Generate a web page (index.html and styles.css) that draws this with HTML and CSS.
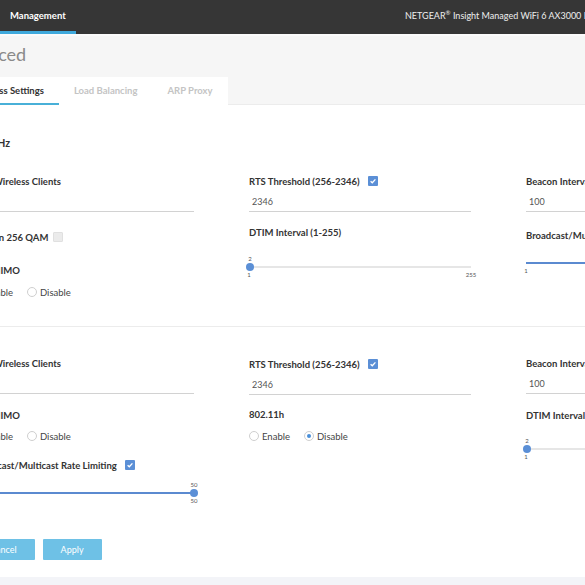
FILE: index.html
```html
<!DOCTYPE html>
<html lang="en">
<head>
<meta charset="utf-8">
<title>Advanced - Wireless Settings</title>
<link rel="stylesheet" href="styles.css">
</head>
<body>
<header class="topbar">
  <nav class="topnav">
    <a class="topnav-item active">Management</a>
  </nav>
  <div class="product">NETGEAR<sup>®</sup> Insight Managed WiFi 6 AX3000 Dual Band Multi-Gig Access Point</div>
</header>

<main class="content">
  <div class="page-head">
    <h1 class="page-title">Advanced</h1>
    <div class="tabs">
      <a class="tab active">Wireless Settings</a>
      <a class="tab">Load Balancing</a>
      <a class="tab">ARP Proxy</a>
    </div>
  </div>

  <section class="panel">
    <div class="band band-1">
      <h2 class="band-title">2.4GHz</h2>
      <div class="grid">
        <div class="col">
          <div class="label">Max Wireless Clients</div>
          <input class="text-input" value="200">
          <div class="label qam">Turn on 256 QAM <span class="cb disabled"></span></div>
          <div class="label mumimo">MU-MIMO</div>
          <div class="radios r1">
            <span class="radio-opt"><span class="radio on"></span>Enable</span>
            <span class="radio-opt"><span class="radio"></span>Disable</span>
          </div>
        </div>
        <div class="col">
          <div class="label">RTS Threshold (256-2346) <span class="cb checked"><svg viewBox="0 0 10 10"><path d="M2.6 5.2 4.3 6.8 7.4 3.4" fill="none" stroke="#fff" stroke-width="1.3"/></svg></span></div>
          <input class="text-input" value="2346">
          <div class="label dtim">DTIM Interval (1-255)</div>
          <div class="slider s-dtim">
            <div class="slider-val" style="left:0.4%">2</div>
            <div class="track"><div class="fill" style="width:0.4%"></div><span class="thumb" style="left:0.4%"></span></div>
            <div class="scale"><span class="min">1</span><span class="max">255</span></div>
          </div>
        </div>
        <div class="col">
          <div class="label">Beacon Interval (100-300)</div>
          <input class="text-input" value="100">
          <div class="label bcast">Broadcast/Multicast Rate Limiting <span class="cb checked"><svg viewBox="0 0 10 10"><path d="M2.6 5.2 4.3 6.8 7.4 3.4" fill="none" stroke="#fff" stroke-width="1.3"/></svg></span></div>
          <div class="slider s-bcast">
            <div class="slider-val" style="left:100%">50</div>
            <div class="track"><div class="fill" style="width:100%"></div><span class="thumb" style="left:100%"></span></div>
            <div class="scale"><span class="min">1</span><span class="max">50</span></div>
          </div>
        </div>
      </div>
    </div>

    <div class="band band-2">
      <div class="grid">
        <div class="col">
          <div class="label">Max Wireless Clients</div>
          <input class="text-input" value="200">
          <div class="label mumimo2">MU-MIMO</div>
          <div class="radios r2">
            <span class="radio-opt"><span class="radio on"></span>Enable</span>
            <span class="radio-opt"><span class="radio"></span>Disable</span>
          </div>
          <div class="label bcast2">Broadcast/Multicast Rate Limiting <span class="cb checked"><svg viewBox="0 0 10 10"><path d="M2.6 5.2 4.3 6.8 7.4 3.4" fill="none" stroke="#fff" stroke-width="1.3"/></svg></span></div>
          <div class="slider s-bcast2">
            <div class="slider-val" style="left:100%">50</div>
            <div class="track"><div class="fill" style="width:100%"></div><span class="thumb" style="left:100%"></span></div>
            <div class="scale"><span class="min">1</span><span class="max">50</span></div>
          </div>
        </div>
        <div class="col">
          <div class="label rts2">RTS Threshold (256-2346) <span class="cb checked"><svg viewBox="0 0 10 10"><path d="M2.6 5.2 4.3 6.8 7.4 3.4" fill="none" stroke="#fff" stroke-width="1.3"/></svg></span></div>
          <input class="text-input" value="2346">
          <div class="label h80211">802.11h</div>
          <div class="radios r3">
            <span class="radio-opt"><span class="radio"></span>Enable</span>
            <span class="radio-opt"><span class="radio on"></span>Disable</span>
          </div>
        </div>
        <div class="col">
          <div class="label">Beacon Interval (100-300)</div>
          <input class="text-input" value="100">
          <div class="label dtim2">DTIM Interval (1-255)</div>
          <div class="slider s-dtim2">
            <div class="slider-val" style="left:0.4%">2</div>
            <div class="track"><div class="fill" style="width:0.4%"></div><span class="thumb" style="left:0.4%"></span></div>
            <div class="scale"><span class="min">1</span><span class="max">255</span></div>
          </div>
        </div>
      </div>
    </div>

    <div class="actions">
      <button class="btn">Cancel</button>
      <button class="btn">Apply</button>
    </div>
  </section>
  <footer class="foot"></footer>
</main>
</body>
</html>
```

FILE: styles.css
```css
* { box-sizing: border-box; }
html, body { margin: 0; padding: 0; }
body {
  font-family: Lato, "Open Sans", "Liberation Sans", sans-serif;
  color: #333;
  background: #fff;
  overflow: hidden;
  width: 585px;
  height: 585px;
}

/* top bar */
.topbar {
  display: flex;
  height: 34px;
  background: #363636;
  width: 1000px;
}
.topnav { flex: 0 0 405px; display: flex; }
.topnav-item {
  display: block;
  padding: 0 10px;
  line-height: 31px;
  height: 34px;
  font-size: 9.5px;
  font-weight: 700;
  color: #fff;
  border-bottom: 3px solid transparent;
}
.topnav-item.active { border-bottom-color: #3fa9dc; }
.product {
  white-space: nowrap;
  font-size: 9px;
  line-height: 31px;
  color: #eee;
}
.product sup { font-size: 6px; line-height: 0; }

/* content */
.content { margin-left: -44px; width: 1100px; }
.page-head {
  background: #f6f6f6;
  height: 71px;
  border-top: 2px solid #fbfbfb;
  border-bottom: 1px solid #ececec;
}
.page-title {
  margin: 0 0 0 -8px;
  padding: 7px 0 0;
  font-size: 18px;
  line-height: 22px;
  font-weight: 400;
  color: #8a8a8a;
}
.tabs {
  display: inline-flex;
  margin-top: 12px;
  background: #fff;
  height: 28px;
}
.tab {
  display: block;
  padding: 0 15px;
  line-height: 28px;
  font-size: 9.5px;
  font-weight: 700;
  color: #c4c4c4;
}
.tab.active { color: #333; box-shadow: inset 0 -2px 0 #48b0d8; }

.panel { padding-left: 16px; background: #fff; }
.band { border-bottom: 1px solid #ececec; margin-left: -16px; padding-left: 16px; }
.band-1 { padding-top: 32px; padding-bottom: 28px; }
.band-2 { padding-top: 30px; border-bottom: none; }
.band-title {
  margin: 0 0 26px 3px;
  font-size: 10.5px;
  line-height: 12px;
  font-weight: 700;
  color: #333;
}
.grid {
  display: grid;
  grid-template-columns: 222px 222px 222px;
  column-gap: 55px;
  align-items: start;
}
.col { display: flex; flex-direction: column; }
.label {
  display: flex;
  align-items: center;
  gap: 8px;
  height: 12px;
  font-size: 9.5px;
  font-weight: 700;
  color: #333;
  white-space: nowrap;
}
.qam { gap: 5px; }
.text-input {
  display: block;
  width: 100%;
  height: 20px;
  margin-top: 5px;
  border: none;
  border-bottom: 1px solid #d2d2d2;
  padding: 0 3px;
  font-family: inherit;
  font-size: 9px;
  color: #555;
  background: transparent;
  outline: none;
}

.cb {
  display: inline-flex;
  flex: none;
  width: 10px;
  height: 10px;
  border-radius: 1px;
}
.cb svg { width: 10px; height: 10px; }
.cb.checked { background: #5b8fd6; }
.cb.disabled { background: #ebebeb; border: 1px solid #e0e0e0; }

.radios { display: flex; gap: 14px; height: 12px; align-items: center; }
.radio-opt {
  display: inline-flex;
  align-items: center;
  gap: 3px;
  font-size: 9.5px;
  color: #444;
}
.radio {
  width: 10px;
  height: 10px;
  border: 1px solid #cfcfcf;
  border-radius: 50%;
  display: inline-flex;
  align-items: center;
  justify-content: center;
}
.radio.on::after {
  content: "";
  width: 4px;
  height: 4px;
  border-radius: 50%;
  background: #4a8fd8;
}

.slider { position: relative; height: 24px; }
.slider-val {
  position: absolute;
  top: 0;
  transform: translateX(-50%);
  font-size: 6px;
  line-height: 8px;
  color: #555;
}
.track {
  position: absolute;
  top: 11px;
  left: 0;
  right: 0;
  height: 2px;
  background: #e6e6e6;
}
.fill { height: 2px; background: #5b8ad0; }
.thumb {
  position: absolute;
  top: -3px;
  width: 8px;
  height: 8px;
  margin-left: -4px;
  border-radius: 50%;
  background: #5b8fd6;
}
.scale {
  position: absolute;
  top: 16px;
  left: 0;
  right: 0;
  height: 8px;
  font-size: 6px;
  line-height: 8px;
  color: #555;
}
.scale .min { position: absolute; left: 0; transform: translateX(-50%); }
.scale .max { position: absolute; right: 0; transform: translateX(50%); }

/* vertical rhythm, band 1 */
.qam { margin-top: 19px; }
.mumimo { margin-top: 21px; }
.r1 { margin-top: 10px; }
.dtim { margin-top: 14px; }
.s-dtim { margin-top: 17px; }
.bcast { margin-top: 17px; }
.s-bcast { margin-top: 10px; }

/* band 2 */
.mumimo2 { margin-top: 15px; }
.r2 { margin-top: 9px; }
.bcast2 { margin-top: 17px; }
.s-bcast2 { margin-top: 10px; }
.rts2 { margin-top: 1px; }
.h80211 { margin-top: 13px; }
.r3 { margin-top: 10px; }
.dtim2 { margin-top: 15px; }
.s-dtim2 { margin-top: 16px; }

.actions {
  display: flex;
  gap: 8px;
  padding: 34px 0 17px;
}
.btn {
  height: 21px;
  padding: 0 18px;
  border: none;
  border-radius: 1px;
  background: #6ec1e6;
  color: #fff;
  font-family: inherit;
  font-size: 9px;
}
.foot { height: 30px; background: #f3f4f8; }
```
